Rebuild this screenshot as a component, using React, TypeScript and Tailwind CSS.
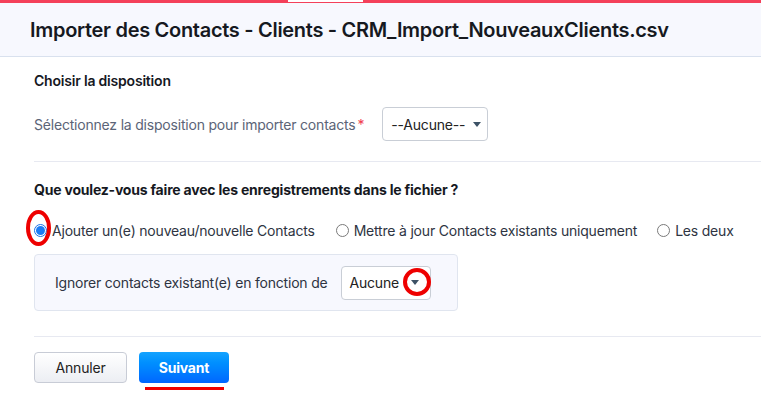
import { useState } from 'react';

const font = { fontFamily: 'Inter, "Noto Sans", sans-serif' };

function Caret() {
  return (
    <svg width="8" height="5" viewBox="0 0 8 5" className="shrink-0">
      <path d="M0 0h8L4 5z" fill="#3d5266" />
    </svg>
  );
}

function Radio({ checked }: { checked?: boolean }) {
  if (checked) {
    return (
      <span className="flex h-[13px] w-[13px] items-center justify-center rounded-full border border-[#1a73e8] bg-white">
        <span className="h-[9px] w-[9px] rounded-full bg-[#1a7cf5]" />
      </span>
    );
  }
  return <span className="h-[13px] w-[13px] rounded-full border border-[#7a7a7a] bg-white" />;
}

export default function App() {
  const [mode, setMode] = useState(0);
  const options = [
    'Ajouter un(e) nouveau/nouvelle Contacts',
    'Mettre à jour Contacts existants uniquement',
    'Les deux',
  ];

  return (
    <div className="h-[403px] w-[761px] overflow-hidden bg-white tracking-[-0.2px] text-[#1f2430]" style={font}>
      {/* Top accent bar */}
      <div className="flex h-[3px] bg-[#f4405a]">
        <div className="ml-[288px] h-[2px] w-[75px] bg-white" />
      </div>

      {/* Header */}
      <div className="flex h-[54px] items-center border-b border-[#d9e1ee] bg-[#f7f8fe] pl-[30px]">
        <h1 className="text-[20px] font-semibold tracking-[-0.3px] text-[#16191f]">
          Importer des Contacts - Clients - CRM_Import_NouveauxClients.csv
        </h1>
      </div>

      <div className="pl-[34px]">
        {/* Layout section */}
        <div className="pt-[14px]">
          <h2 className="text-[14px] font-semibold leading-[20px] text-[#16191f]">Choisir la disposition</h2>
          <div className="mt-[16px] flex items-center">
            <span className="whitespace-nowrap text-[14px] text-[#5b6477]">
              Sélectionnez la disposition pour importer contacts
              <span className="ml-[2px] text-[#ef3b4c]">*</span>
            </span>
            <button className="ml-[18px] flex h-[34px] w-[106px] items-center gap-[8px] whitespace-nowrap rounded-[4px] border border-[#c9ced6] bg-white pl-[8px] text-[14px] text-[#222]">
              --Aucune--
              <Caret />
            </button>
          </div>
        </div>

        <div className="mt-[20px] border-t border-[#e7e9f1]" />

        {/* Records section */}
        <div className="pt-[18px]">
          <h2 className="text-[14px] font-bold leading-[20px] text-[#16191f]">
            Que voulez-vous faire avec les enregistrements dans le fichier ?
          </h2>
          <div className="mt-[20px] flex items-center whitespace-nowrap text-[14px] text-[#2e3442]">
            {options.map((label, i) => (
              <label
                key={label}
                onClick={() => setMode(i)}
                className={`relative flex cursor-pointer items-center gap-[5px] ${i === 0 ? '' : i === 1 ? 'ml-[21px]' : 'ml-[20px]'}`}
              >
                <Radio checked={mode === i} />
                {label}
                {i === 0 && (
                  <span className="absolute left-[-8px] top-[-10px] h-[36px] w-[25px] rounded-[50%] border-[4px] border-[#ee0000]" />
                )}
              </label>
            ))}
          </div>

          <div className="mt-[13px] flex h-[57px] w-[424px] items-center rounded-[4px] border border-[#e0e5ef] bg-[#f7f8fe] pl-[20px]">
            <span className="whitespace-nowrap text-[14px] text-[#2e3442]">Ignorer contacts existant(e) en fonction de</span>
            <button className="relative ml-[13px] flex h-[34px] w-[90px] items-center gap-[12px] rounded-[4px] border border-[#c9ced6] bg-white pl-[8px] text-[14px] text-[#222]">
              Aucune
              <Caret />
              <span className="absolute left-[61px] top-[1px] h-[28px] w-[28px] rounded-full border-[4px] border-[#ee0000]" />
            </button>
          </div>
        </div>

        <div className="mt-[25px] border-t border-[#e7e9f1]" />

        {/* Actions */}
        <div className="mt-[15px] flex gap-[12px]">
          <button className="h-[31px] w-[93px] rounded-[4px] border border-[#c8ccd6] bg-gradient-to-b from-white to-[#eceef3] text-[14px] text-[#222]">
            Annuler
          </button>
          <div className="flex flex-col items-center">
            <button className="h-[31px] w-[90px] rounded-[4px] bg-gradient-to-b from-[#14a3ff] to-[#0066ff] text-[14px] font-bold text-white">
              Suivant
            </button>
            <div className="mt-[4px] h-[3px] w-[79px] bg-[#f00000]" />
          </div>
        </div>
      </div>
    </div>
  );
}
